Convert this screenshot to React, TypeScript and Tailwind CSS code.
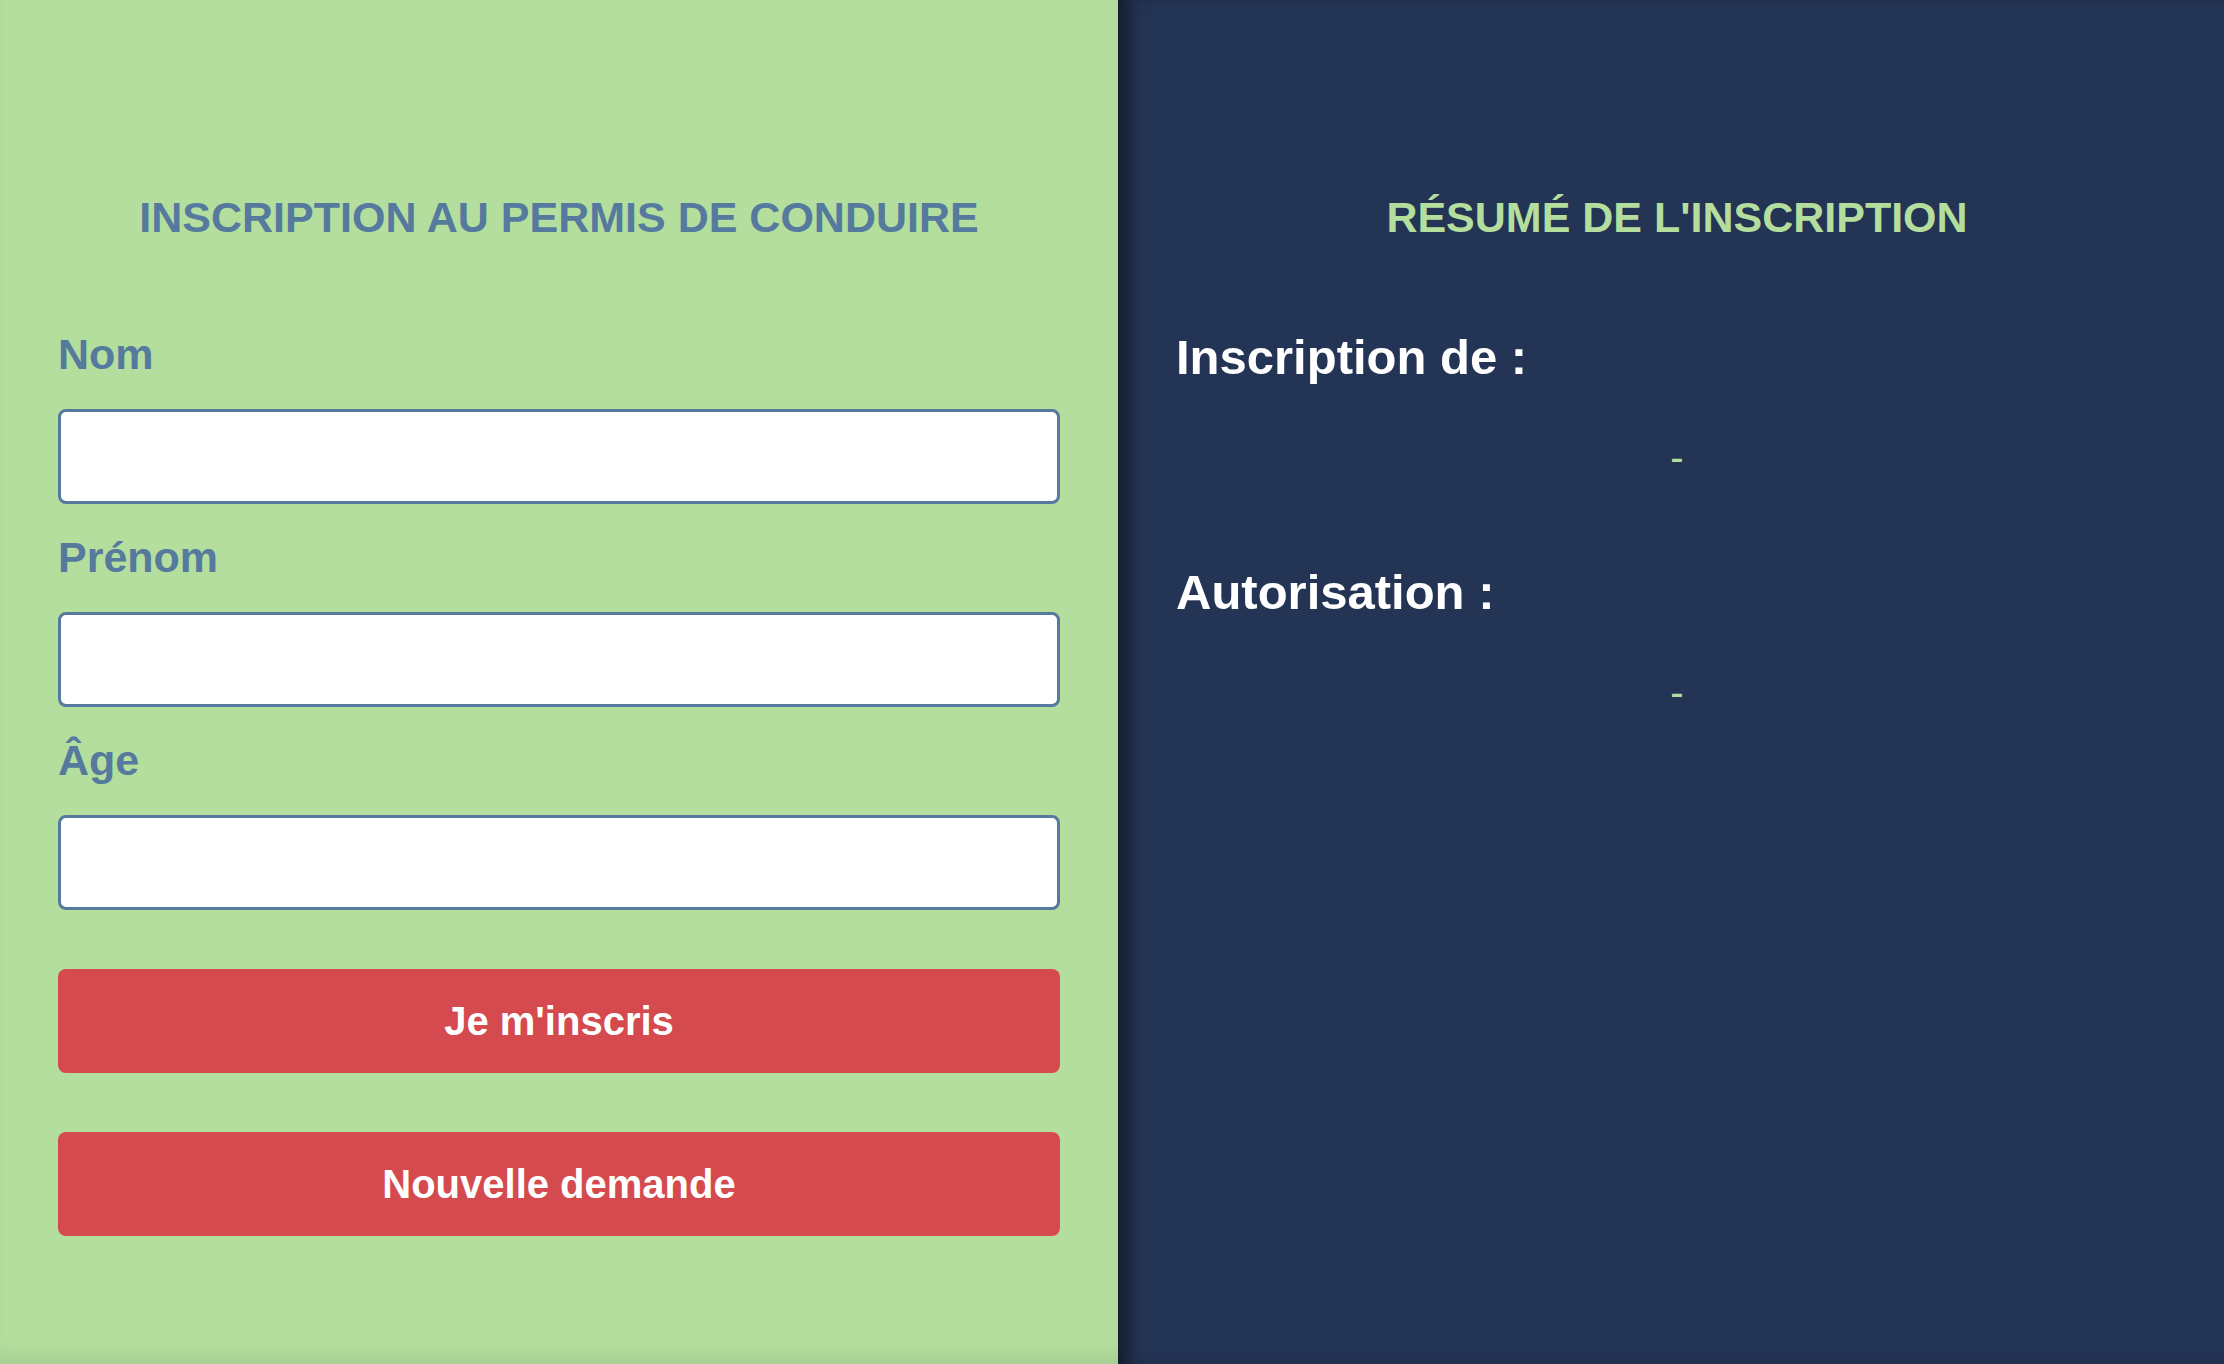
import { useState } from "react";

const fields = [
  { id: "nom", label: "Nom" },
  { id: "prenom", label: "Prénom" },
  { id: "age", label: "Âge" },
];

export default function App() {
  const [values, setValues] = useState<Record<string, string>>({ nom: "", prenom: "", age: "" });
  const [summary, setSummary] = useState<{ who: string; ok: string } | null>(null);

  const submit = () => {
    const age = parseInt(values.age, 10);
    setSummary({
      who: `${values.prenom} ${values.nom}`.trim() || "-",
      ok: isNaN(age) ? "-" : age >= 18 ? "Autorisé" : "Non autorisé",
    });
  };

  const reset = () => {
    setValues({ nom: "", prenom: "", age: "" });
    setSummary(null);
  };

  return (
    <div className="flex h-screen w-full overflow-hidden font-['Liberation_Sans',Arial,sans-serif]">
      {/* Form */}
      <div className="w-[1118px] shrink-0 bg-[#b3de9d] px-[58px] flex flex-col shadow-[inset_0_-18px_22px_-14px_rgba(0,0,0,0.1)]">
        <h1 className="pt-[196px] text-center text-[43px] leading-none font-bold text-[#557a9e]">
          INSCRIPTION AU PERMIS DE CONDUIRE
        </h1>

        <div className="mt-[62px] flex flex-col">
          {fields.map((f) => (
            <div key={f.id} className="flex flex-col">
              <label htmlFor={f.id} className="mt-[32px] text-[43px] leading-none font-bold text-[#557a9e]">
                {f.label}
              </label>
              <input
                id={f.id}
                value={values[f.id]}
                onChange={(e) => setValues({ ...values, [f.id]: e.target.value })}
                className="mt-[33px] h-[95px] w-full rounded-[8px] border-[3px] border-[#557a9e] bg-white px-4 text-[32px] outline-none"
              />
            </div>
          ))}
        </div>

        <button
          onClick={submit}
          className="mt-[59px] h-[104px] w-full rounded-[8px] bg-[#d44a4e] text-[40px] font-bold text-white"
        >
          Je m'inscris
        </button>
        <button
          onClick={reset}
          className="mt-[59px] h-[104px] w-full rounded-[8px] bg-[#d44a4e] text-[40px] font-bold text-white"
        >
          Nouvelle demande
        </button>
      </div>

      {/* Summary */}
      <div className="flex-1 bg-[#243455] pl-[58px] pr-[46px] flex flex-col shadow-[inset_18px_0_18px_-8px_rgba(0,0,0,0.45)]">
        <h2 className="pt-[196px] text-center text-[43px] leading-none font-bold text-[#b3de9d]">
          RÉSUMÉ DE L'INSCRIPTION
        </h2>

        <h3 className="mt-[94px] text-[49px] leading-none font-bold text-white">Inscription de :</h3>
        <p className="mt-[55px] text-center text-[40px] leading-none text-[#b3de9d]">{summary ? summary.who : "-"}</p>

        <h3 className="mt-[91px] text-[49px] leading-none font-bold text-white">Autorisation :</h3>
        <p className="mt-[55px] text-center text-[40px] leading-none text-[#b3de9d]">{summary ? summary.ok : "-"}</p>
      </div>
    </div>
  );
}
